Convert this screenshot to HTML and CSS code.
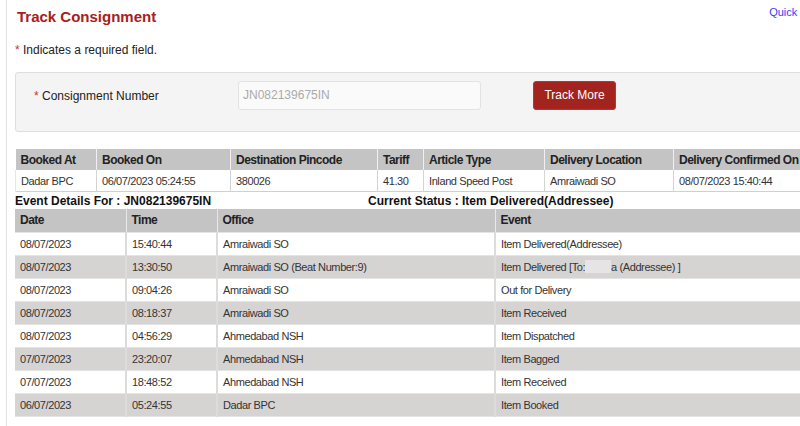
FILE: index.html
```html
<!DOCTYPE html>
<html>
<head>
<meta charset="utf-8">
<link rel="stylesheet" href="styles.css">
</head>
<body>
<div class="page">
  <div class="top">
    <h1 class="title">Track Consignment</h1>
    <a class="quick" href="#">Quick Links</a>
  </div>
  <p class="note"><span class="req">*</span> Indicates a required field.</p>
  <div class="panel">
    <label class="label"><span class="req">*</span> Consignment Number</label>
    <input class="input" type="text" placeholder="JN082139675IN">
    <button class="btn">Track More</button>
  </div>
  <table class="tbl booking">
    <colgroup>
      <col class="c81"><col class="c134"><col class="c147"><col class="c46"><col class="c121"><col class="c129"><col class="c157">
    </colgroup>
    <tr class="head"><th>Booked At</th><th>Booked On</th><th>Destination Pincode</th><th>Tariff</th><th>Article Type</th><th>Delivery Location</th><th>Delivery Confirmed On</th></tr>
    <tr><td>Dadar BPC</td><td>06/07/2023 05:24:55</td><td>380026</td><td>41.30</td><td>Inland Speed Post</td><td>Amraiwadi SO</td><td>08/07/2023 15:40:44</td></tr>
  </table>
  <div class="evhead">
    <span class="evfor">Event Details For : JN082139675IN</span>
    <span class="status">Current Status : Item Delivered(Addressee)</span>
  </div>
  <table class="tbl events">
    <colgroup>
      <col class="c111"><col class="c91"><col class="c278"><col class="c335">
    </colgroup>
    <tr class="head"><th>Date</th><th>Time</th><th>Office</th><th>Event</th></tr>
    <tr><td>08/07/2023</td><td>15:40:44</td><td>Amraiwadi SO</td><td>Item Delivered(Addressee)</td></tr>
    <tr class="alt"><td>08/07/2023</td><td>13:30:50</td><td>Amraiwadi SO (Beat Number:9)</td><td>Item Delivered [To:<span class="blur"></span>a (Addressee) ]</td></tr>
    <tr><td>08/07/2023</td><td>09:04:26</td><td>Amraiwadi SO</td><td>Out for Delivery</td></tr>
    <tr class="alt"><td>08/07/2023</td><td>08:18:37</td><td>Amraiwadi SO</td><td>Item Received</td></tr>
    <tr><td>08/07/2023</td><td>04:56:29</td><td>Ahmedabad NSH</td><td>Item Dispatched</td></tr>
    <tr class="alt"><td>07/07/2023</td><td>23:20:07</td><td>Ahmedabad NSH</td><td>Item Bagged</td></tr>
    <tr><td>07/07/2023</td><td>18:48:52</td><td>Ahmedabad NSH</td><td>Item Received</td></tr>
    <tr class="alt"><td>06/07/2023</td><td>05:24:55</td><td>Dadar BPC</td><td>Item Booked</td></tr>
  </table>
</div>
</body>
</html>
```
FILE: styles.css
```css
html, body {
  margin: 0;
  padding: 0;
  background: #fff;
  overflow: hidden;
}
body {
  font-family: "Liberation Sans", Arial, sans-serif;
  font-size: 12px;
  color: #222;
  width: 800px;
  height: 426px;
}
.page {
  margin-left: 6px;
  border-left: 1px solid #e2e2e2;
  padding-left: 8px;
  width: 840px;
  min-height: 426px;
}
.top {
  display: flex;
  align-items: flex-start;
  height: 34px;
}
.title {
  margin: 8px 0 0 2px;
  font-size: 15px;
  font-weight: bold;
  color: #a8201a;
}
.quick {
  margin-left: auto;
  margin-right: 29px;
  margin-top: 6px;
  font-size: 11px;
  color: #3a3aff;
  text-decoration: none;
}
.note {
  margin: 9px 0 0 0;
  font-size: 12px;
  line-height: 14px;
  color: #222;
}
.req { color: #c0392b; }
.panel {
  margin-top: 15px;
  height: 56px;
  background: #f4f4f4;
  border: 1px solid #dedede;
  border-radius: 3px;
  display: flex;
  align-items: center;
  padding-bottom: 2px;
}
.label {
  width: 204px;
  padding-left: 18px;
  font-size: 12px;
  color: #222;
  margin-top: -11px;
}
.input {
  width: 243px;
  height: 29px;
  box-sizing: border-box;
  border: 1px solid #e2e2e2;
  border-radius: 3px;
  background: #fafafa;
  font-family: "Liberation Sans", Arial, sans-serif;
  font-size: 12px;
  padding: 0 4px;
  margin-top: -12px;
}
.input::placeholder { color: #aaa; }
.btn {
  margin-left: 52px;
  margin-top: -12px;
  width: 83px;
  height: 29px;
  background: #a3241f;
  border: 1px solid #b33;
  border-radius: 3px;
  color: #fff;
  font-family: "Liberation Sans", Arial, sans-serif;
  font-size: 12px;
}
.c81 { width: 81px; }
.c134 { width: 134px; }
.c147 { width: 147px; }
.c46 { width: 46px; }
.c121 { width: 121px; }
.c129 { width: 129px; }
.c157 { width: 157px; }
.c111 { width: 111px; }
.c91 { width: 91px; }
.c278 { width: 278px; }
.c335 { width: 335px; }
.tbl {
  border-collapse: collapse;
  table-layout: fixed;
  font-size: 11px;
  letter-spacing: -0.4px;
}
.tbl th, .tbl td {
  text-align: left;
  padding: 0 5px;
  white-space: nowrap;
  overflow: hidden;
}
.tbl th {
  font-weight: bold;
  font-size: 12px;
  letter-spacing: -0.5px;
  color: #222;
}
.booking {
  margin-top: 17px;
  width: 815px;
  border-bottom: 1px solid #d0d0d0;
}
.booking .head { background: #c4c4c4; height: 21px; }
.booking .head th { border-left: 1px solid #f0f0f0; }
.booking .head th:first-child { border-left: none; }
.booking td {
  height: 21px;
  border-left: 1px solid #d4d4d4;
  color: #333;
}
.booking td:first-child { border-left: 1px solid #e6e6e6; }
.evhead {
  position: relative;
  height: 17px;
  font-weight: bold;
  font-size: 12px;
  line-height: 19px;
  color: #111;
}
.status {
  position: absolute;
  left: 353px;
  top: 0;
}
.events {
  width: 815px;
}
.events tr { height: 23px; }
.events .head { background: #c4c4c4; }
.events .head th { border-left: 1px solid #e8e8e8; }
.events .head th:first-child { border-left: none; }
.events td {
  border-left: 2px solid #dcdcdc;
  border-top: 1px solid #e4e4e4;
  border-bottom: 1px solid #e4e4e4;
  color: #333;
}
.events td:first-child { border-left: none; }
.events .alt td { background: #d6d3d3; }
.blur {
  display: inline-block;
  background: #e6e4e4;
  width: 26px;
  height: 13px;
  vertical-align: -2px;
}
```
